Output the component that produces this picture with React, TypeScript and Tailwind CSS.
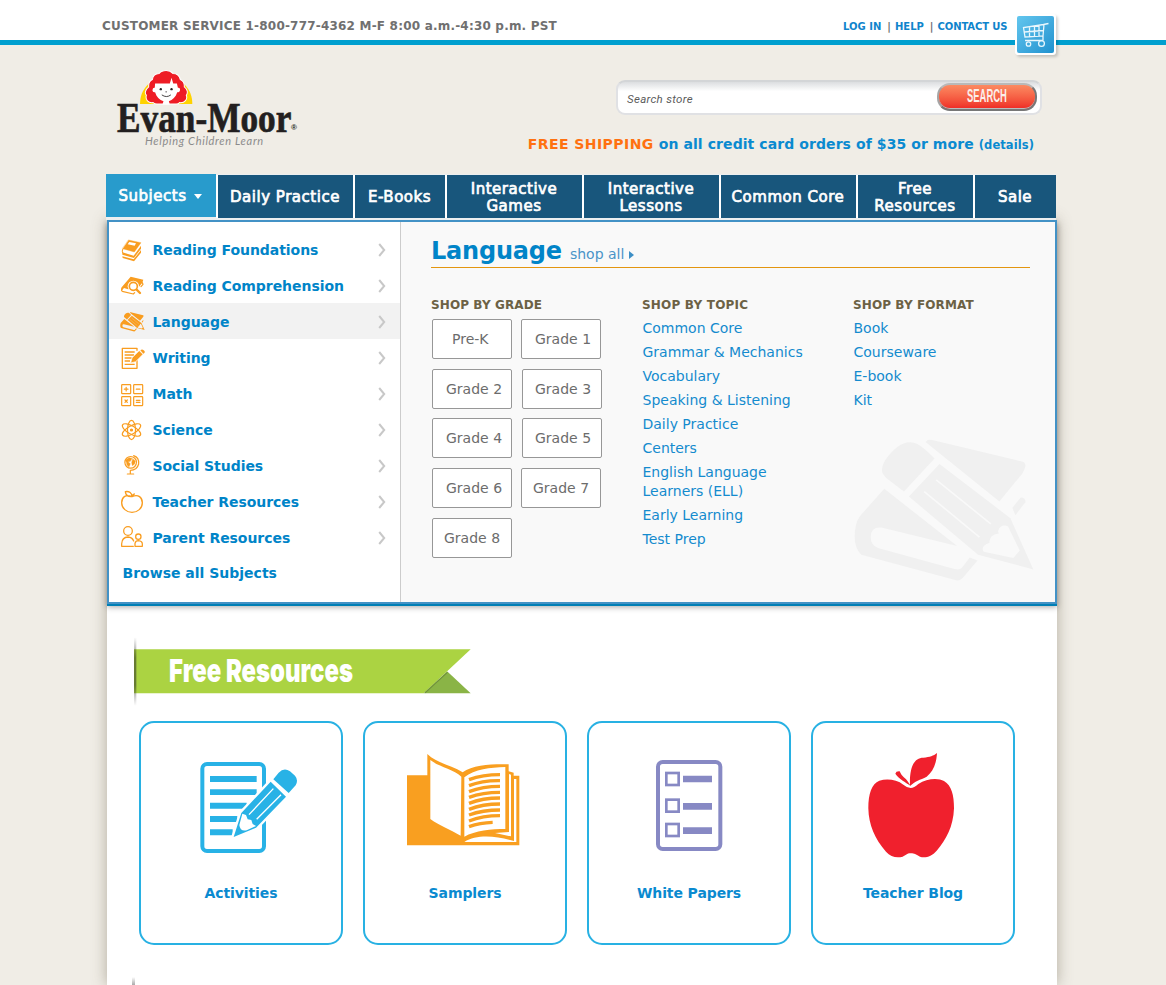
import React from "react";

const PencilBook = ({ bg }: { bg: string }) => (
  <>
    <path fill="currentColor" d="M157 150C157 120 190 90 205 78C225 62 250 60 270 74C290 88 302 101 315 114L223 213L170 172Q157 160 157 150Z" />
    <path fill="currentColor" d="M288 64L295 58Q300 56 308 58L578 123Q590 126 588 138Q586 148 578 160L510 243Z" />
    <path fill="currentColor" d="M238 228L330 130L543 293L612 447L446 403Z" />
    <path stroke={bg} strokeWidth="5" fill="none" d="M320 178L484 310M284 213L450 350" />
    <path fill={bg} d="M506 332Q510 314 528 315L536 318L571 390L552 413L463 394Q456 385 464 376Q470 370 480 368Q480 352 490 345Q500 338 508 340Z" />
    <path fill="currentColor" d="M549 262L574 231Q590 232 588 245L558 284Z" />
    <path fill="currentColor" d="M164 205L383 377L155 321Q123 318 123 350Q123 374 145 383L375 446Q390 450 397 443L421 411L444 420L402 470Q393 482 380 480L95 403Q75 385 75 350Q75 310 90 288Z" />
  </>
);

const Icon = ({ vb, children }: { vb: string; children: React.ReactNode }) => (
  <svg viewBox={vb} className="h-6 w-[25px] shrink-0 overflow-visible text-[#f99d20]" fill="none" stroke="currentColor" strokeWidth="4" strokeLinejoin="round" strokeLinecap="round">
    {children}
  </svg>
);

const subjects = [
  {
    name: "Reading Foundations",
    icon: (
      <Icon vb="60 21 75 72">
        <path fill="currentColor" strokeWidth="1" d="M86 30L123 38L103 66L68 56Z" />
        <path fill="#fff" stroke="none" d="M88 36L108 40L104 47L83 43Z" />
        <path fill="currentColor" stroke="none" d="M67 67L101 77L123 47V56L102 84L67 74Z" />
        <path fill="currentColor" stroke="none" d="M67 79L101 88L123 60V68L102 94L68 84Z" />
        <path strokeWidth="3" d="M68 58Q65 63 68 69" />
      </Icon>
    ),
  },
  {
    name: "Reading Comprehension",
    icon: (
      <Icon vb="60 129 75 72">
        <path fill="currentColor" stroke="none" d="M92 140L130 149L127 158L116 172L84 178L72 174L64 184L65 172Z" />
        <path d="M66 174Q63 182 67 184L100 192L104 188M127 158L129 163L123 170" strokeWidth="3.500" />
        <circle cx="100" cy="169" r="17" fill="#fff" stroke="none" />
        <circle cx="100" cy="169" r="12" fill="#fff" strokeWidth="5" />
        <path d="M110 179L120 189" strokeWidth="7" />
      </Icon>
    ),
  },
  {
    name: "Language",
    icon: (
      <svg viewBox="70 50 550 440" className="mt-[2px] h-[20px] w-[25px] shrink-0 text-[#f99d20]">
        <PencilBook bg="#f2f2f2" />
      </svg>
    ),
  },
  {
    name: "Writing",
    icon: (
      <Icon vb="60 345 75 72">
        <path d="M111 361V355H67V415H111V392" />
        <path d="M74 366H104M74 375H102M74 384H95M74 393H90M74 403H104" strokeWidth="4" strokeLinecap="butt" />
        <path fill="currentColor" stroke="#fff" strokeWidth="2" d="M118 362L129 373L107 395L92 399L96 384Z" />
        <path fill="currentColor" stroke="none" d="M121 361Q126 356 130 360Q137 365 133 369L130 371Z" />
      </Icon>
    ),
  },
  {
    name: "Math",
    icon: (
      <Icon vb="60 453 75 72">
        <g strokeWidth="3.600">
          <rect x="65" y="464" width="27" height="27" rx="2" />
          <rect x="101" y="464" width="27" height="27" rx="2" />
          <rect x="65" y="500" width="27" height="27" rx="2" />
          <rect x="101" y="500" width="27" height="27" rx="2" />
          <path d="M73 477.500H84M78.500 472V483M109 477.500H120M75 510L82 517M82 510L75 517M109 511H120M109 517H120" />
        </g>
      </Icon>
    ),
  },
  {
    name: "Science",
    icon: (
      <Icon vb="60 51 75 72">
        <g strokeWidth="3.600">
          <ellipse cx="94.500" cy="90" rx="12" ry="29" />
          <ellipse cx="94.500" cy="90" rx="12" ry="31" transform="rotate(60 94.500 90)" />
          <ellipse cx="94.500" cy="90" rx="12" ry="31" transform="rotate(-60 94.500 90)" />
          <circle cx="94.500" cy="90" r="3" fill="currentColor" />
        </g>
      </Icon>
    ),
  },
  {
    name: "Social Studies",
    icon: (
      <Icon vb="60 159 75 72">
        <g strokeWidth="3.600">
          <circle cx="92" cy="187" r="17.500" />
          <path d="M101 167Q118 173 116 192Q111 211 91 211M91 211V222M82 222H101" />
          <path fill="currentColor" strokeWidth="1" d="M77 180L87 173L96 175L91 184L84 185L91 191L87 201L81 195ZM98 176L106 183L104 192L97 197L95 188Z" />
        </g>
      </Icon>
    ),
  },
  {
    name: "Teacher Resources",
    icon: (
      <Icon vb="60 267 75 72">
        <path strokeWidth="4" d="M96 290C76 281 65 293 65 308C65 325 80 337 96 337C113 337 127 325 127 308C127 293 115 281 96 290ZM96 290C82 291 77 286 76 275C88 273 96 279 96 290ZM97 289Q97 284 103 282" />
      </Icon>
    ),
  },
  {
    name: "Parent Resources",
    icon: (
      <Icon vb="60 375 75 72">
        <g strokeWidth="3.800">
          <circle cx="84" cy="393" r="13" />
          <path d="M65 439V431Q66 412 84 411Q97 412 101 423M65 439H100" />
          <circle cx="115" cy="410" r="8" />
          <path d="M105 439V430Q107 422 115 422Q127 423 127 432V439Z" />
        </g>
      </Icon>
    ),
  },
];

const navItems = [
  { lines: ["Daily Practice"], w: "w-[135px]" },
  { lines: ["E-Books"], w: "w-[90px]" },
  { lines: ["Interactive", "Games"], w: "w-[135px]" },
  { lines: ["Interactive", "Lessons"], w: "w-[135px]" },
  { lines: ["Common Core"], w: "w-[135px]" },
  { lines: ["Free", "Resources"], w: "w-[115px]" },
  { lines: ["Sale"], w: "w-[81px]" },
];

const grades = [
  [["Pre-K", "pl-[19px]"], ["Grade 1", "ml-[9px] pl-[13px]"]],
  [["Grade 2", "pl-[13px]"], ["Grade 3", "ml-[10px] pl-[12px]"]],
  [["Grade 4", "pl-[13px]"], ["Grade 5", "ml-[10px] pl-[12px]"]],
  [["Grade 6", "pl-[13px]"], ["Grade 7", "ml-[9px] pl-[11px]"]],
  [["Grade 8", "pl-[11px]"]],
];

const topics = ["Common Core", "Grammar & Mechanics", "Vocabulary", "Speaking & Listening", "Daily Practice", "Centers", "English Language Learners (ELL)", "Early Learning", "Test Prep"];
const formats = ["Book", "Courseware", "E-book", "Kit"];

const Logo = () => (
  <div className="relative ml-[10px] h-[82px] w-[190px]">
    <svg viewBox="145 205 170 110" className="absolute top-0 left-[21px] h-[37px] w-[57px]">
      <path fill="#ffd200" d="M151 312C151 268 182 234 229 234C277 234 307 268 307 312Z" />
      <path fill="#ee1c25" stroke="#fff" strokeWidth="3" d="M229 212C218 212 212 216 208 221C194 222 189 230 188 239C179 243 176 251 177 261C167 269 164 280 170 286C166 300 176 310 190 308C194 312 200 313 206 312H254C260 313 266 312 269 308C284 310 294 298 289 286C295 279 292 267 283 261C284 250 280 243 271 239C269 228 261 221 249 221C244 215 239 212 229 212Z" />
      <path fill="#fff" d="M196 251H240L245 234L250 251H261L264 264Q272 263 270 273Q267 279 262 277C258 291 248 300 237 304L240 314H218L221 304C209 300 200 291 196 277Q189 279 188 271Q189 263 195 264Z" />
      <circle cx="213" cy="268" r="3.500" fill="#231f20" />
      <circle cx="245" cy="268" r="3.500" fill="#231f20" />
      <path stroke="#231f20" strokeWidth="2.500" fill="none" d="M216 285Q230 295 243 285M227 276H231" />
    </svg>
    <div className="absolute top-[33px] left-0 origin-left scale-x-[0.84] font-['Liberation_Serif',serif] text-[42px] leading-[34px] font-bold whitespace-nowrap text-[#231f20] [-webkit-text-stroke:0.7px_#231f20]">Evan-Moor</div>
    <div className="absolute top-[53px] left-[174px] font-['Liberation_Sans',sans-serif] text-[8px] leading-[14px] font-bold text-[#231f20]">®</div>
    <div className="absolute top-[67px] left-[28px] font-['Lato',sans-serif] text-[11px] leading-[12px] tracking-[0.7px] whitespace-nowrap text-[#8b8b8b] italic">Helping Children Learn</div>
  </div>
);

const cards = [
  {
    label: "Activities",
    vb: "33 39 600 450",
    art: (
      <>
        <rect x="217" y="162" width="185" height="261" rx="14" fill="none" stroke="#28b2e6" strokeWidth="12" />
        <path fill="#28b2e6" d="M240 198H380V216H240ZM240 238H380V255H240ZM240 278H350V296H240ZM240 318H322V336H240ZM240 358H308V376H240Z" />
        <path fill="#28b2e6" stroke="#fff" strokeWidth="14" d="M422 215L468 260L378 353L311 381L334 309ZM430 208L446 188Q462 172 480 184L495 197Q506 210 497 226L476 249Z" />
        <path fill="#28b2e6" d="M422 215L468 260L378 353L311 381L334 309ZM430 208L446 188Q462 172 480 184L495 197Q506 210 497 226L476 249Z" />
        <path stroke="#fff" strokeWidth="4" fill="none" d="M430 236L357 314M453 254L380 328" />
        <path fill="#fff" d="M337 311L348 315L353 328L364 330L368 342L378 348L350 361Q330 365 328 345Z" />
      </>
    ),
  },
  {
    label: "Samplers",
    vb: "705 39 600 450",
    art: (
      <>
        <path fill="#f99f20" d="M892 132C920 160 965 165 998 187C1030 163 1090 162 1136 163V184L1151 188V197H1168V406H831V196H892Z" />
        <path fill="#fff" d="M901 150C925 170 970 178 994 200L992 377C960 358 925 345 901 327ZM1003 202C1035 176 1080 173 1126 171V357C1085 357 1035 362 1003 380ZM1137 192L1143 194V379L1095 369L1137 366ZM1152 207H1159V396H1003C1040 372 1100 378 1152 393Z" />
        <path stroke="#f99f20" strokeWidth="10" fill="none" d="M1017 209Q1058 194 1110 194M1017 227Q1058 211 1110 212M1017 245Q1058 229 1110 229M1017 262Q1058 247 1110 247M1017 280Q1058 264 1110 264M1017 298Q1058 282 1110 282M1017 315Q1058 300 1110 300M1017 333Q1058 317 1110 317M1017 350Q1050 338 1088 337" />
      </>
    ),
  },
  {
    label: "White Papers",
    vb: "27 39 600 450",
    art: (
      <g stroke="#8789c4" fill="none">
        <rect x="234" y="156" width="187" height="261" rx="14" strokeWidth="12" />
        <g strokeWidth="8">
          <rect x="259" y="189" width="37" height="36" />
          <rect x="259" y="269" width="37" height="36" />
          <rect x="259" y="342" width="37" height="36" />
        </g>
        <path strokeWidth="20" d="M309 207H396M309 289H396M309 362H396" />
      </g>
    ),
  },
  {
    label: "Teacher Blog",
    vb: "699 39 600 450",
    art: (
      <path
        fill="#f0202d"
        d="M992 234Q1002 234 1015 222C1040 205 1075 203 1092 213C1115 227 1122 255 1122 295C1120 350 1098 390 1070 422C1055 440 1035 445 1020 440C1005 433 1005 430 992 430C980 430 978 436 968 440C950 445 932 441 918 425C885 388 866 345 865 295C865 250 875 222 898 212C920 205 950 208 970 224Q982 234 992 234ZM990 228C988 180 998 143 1030 143C1050 141 1060 138 1071 129C1069 165 1058 185 1040 200C1020 210 1005 213 990 228ZM946 191Q948 183 959 184C965 200 978 205 984 215L992 228C975 215 958 208 946 191Z"
      />
    ),
  },
];

export default function App() {
  return (
    <div className="h-[985px] w-[1166px] overflow-hidden bg-[#f0ede6] font-['DejaVu_Sans',sans-serif]">
      <header className="flex h-[45px] items-start border-b-[5px] border-[#009fcf] bg-white pl-[102px]">
        <div className="w-[741px] pt-[18px] text-[12px] leading-4 font-bold tracking-[0.2px] text-[#707070]">CUSTOMER SERVICE 1-800-777-4362 M-F 8:00 a.m.-4:30 p.m. PST</div>
        <div className="flex w-[172px] pt-[20px] text-[10px] leading-[14px] font-bold whitespace-nowrap text-[#0f84cc]">
          <a>LOG IN</a>
          <span className="mr-[4px] ml-[6px] text-[#707070]">|</span>
          <a>HELP</a>
          <span className="mr-[4px] ml-[6px] text-[#707070]">|</span>
          <a className="tracking-[-0.1px]">CONTACT US</a>
        </div>
        <div className="relative z-10 mt-[14px] h-[41px] w-[41px] rounded-[3px] bg-white p-[2px] shadow-[2px_2px_3px_rgba(0,0,0,0.18)]">
          <svg viewBox="0 0 37 37" className="h-[37px] w-[37px] rounded-[2px] bg-linear-to-br from-[#62c6ee] to-[#1e92cf]" fill="none" stroke="#e9f7fd" strokeWidth="1.300">
            <path d="M31.500 7.500L26.500 8.500L6.500 11.500L8 21L26 20L27 8.500M8 24.500H26M26 20V24.500M7.300 16L26.500 14.500M12.500 11V21M17.500 10V20.500M22 9.500V20" />
            <circle cx="11.500" cy="28" r="2.200" />
            <circle cx="24.500" cy="27.500" r="2.900" />
          </svg>
        </div>
      </header>

      <div className="ml-[107px] w-[950px]">
        <div className="flex h-[129px] justify-between">
          <div className="pt-[23px]">
            <Logo />
          </div>
          <div className="flex flex-col items-end pt-[35px]">
            <div className="mr-[15px] flex h-[35px] w-[426px] items-start justify-between rounded-[9px] border-2 border-[#e0e1e4] border-t-[#d3d5d7] bg-linear-to-b from-[#dcdee0] via-white via-30% to-white pr-[3px] pl-[9px]">
              <span className="pt-[10px] font-['Roboto',sans-serif] text-[11.5px] leading-[14px] tracking-[0.3px] text-[#5c5c5c] italic">Search store</span>
              <button className="mt-px flex h-[28px] w-[100px] justify-center rounded-[13px] border-2 border-t-[#b9b9b9] border-r-[#777] border-b-[#777] border-l-[#a5a5a5] bg-linear-to-b from-[#fb8a62] to-[#ee2524] shadow-[inset_0_-1px_0_#bbb]">
                <span className="scale-x-[0.54] font-['Liberation_Sans',sans-serif] text-[17.5px] leading-[23px] font-bold text-[#fbeeea]">SEARCH</span>
              </button>
            </div>
            <div className="mt-[20px] mr-[23px] text-[14px] leading-[18px] font-bold tracking-[0.08px] whitespace-nowrap text-[#0a8ad0]">
              <span className="tracking-[0.45px] text-[#ff7110]">FREE SHIPPING</span> on all credit card orders of $35 or more <span className="text-[11.5px]">(details)</span>
            </div>
          </div>
        </div>

        <nav className="relative z-10 -ml-px flex h-[46px] w-[950px] items-start bg-[#eceff0] text-[15px] leading-[17px] tracking-[0.52px] text-white [-webkit-text-stroke:0.7px_#fff]">
          <div className="mr-[2px] flex h-[43px] w-[110px] items-center justify-center gap-[7px] bg-[#289bcc] pt-[2px] pr-[2px]">
            Subjects
            <svg viewBox="0 0 8 5" className="h-[5px] w-[8px]" stroke="none">
              <path fill="#fff" d="M0 0H8L4 5Z" />
            </svg>
          </div>
          <div className="mt-px -ml-[2px] flex gap-[2px] bg-white pl-[2px]">
            {navItems.map((n, i) => (
              <div key={i} className={`flex h-[43px] flex-col items-center justify-center bg-[#18567c] pt-[2px] pr-px text-center ${n.w}`}>
                {n.lines.map((l) => (
                  <span key={l}>{l}</span>
                ))}
              </div>
            ))}
          </div>
        </nav>

        <main className="h-[765px] bg-white shadow-[0_0_14px_rgba(90,80,60,0.42)]">
          <section className="relative flex h-[384px] border-2 border-[#4392c6] bg-[#f9f9f9] shadow-[0_2px_0_#007fb5,0_3px_6px_rgba(0,0,0,0.35)]">
            <div className="w-[292px] border-r border-[#ccc] bg-white pt-[9px]">
              {subjects.map((s) => (
                <div key={s.name} className={`flex h-9 items-center pl-[11px] ${s.name === "Language" ? "bg-[#f2f2f2]" : ""}`}>
                  {s.icon}
                  <span className="ml-[7.5px] flex-1 pt-px text-[14px] leading-5 font-bold tracking-[-0.05px] text-[#0084c8]">{s.name}</span>
                  <svg viewBox="0 0 8 14" className="mt-px mr-[14px] h-[14px] w-[8px]" fill="none" stroke="#c8c8c8" strokeWidth="2">
                    <path d="M1.200 1L6.200 7L1.200 13" />
                  </svg>
                </div>
              ))}
              <div className="pt-[8px] pl-[13.5px] text-[14px] leading-[20px] font-bold text-[#0084c8]">Browse all Subjects</div>
            </div>
            <div className="w-[654px] pt-[12px] pr-[25px] pl-[30px]">
              <div className="flex h-[34px] items-baseline border-b border-[#e3960f] pt-px whitespace-nowrap">
                <h2 className="text-[24px] leading-[33px] font-bold tracking-[-0.2px] text-[#0084c8]">Language</h2>
                <span className="ml-[8px] text-[14px] text-[#4a94c8]">shop all</span>
                <svg viewBox="0 0 5 8" className="ml-[5px] h-[8px] w-[5px]">
                  <path fill="#3d8fc6" d="M0 0L5 4L0 8Z" />
                </svg>
              </div>
              <div className="flex pt-[29px]">
                <div className="w-[211px]">
                  <h3 className="mb-[14px] h-[8px] text-[12px] leading-[16px] font-bold tracking-[0.1px] text-[#6c6145]">SHOP BY GRADE</h3>
                  {grades.map((row, r) => (
                    <div key={r} className="mb-[9.7px] ml-px flex">
                      {row.map(([g, cls]) => (
                        <div key={g} className={`h-[40px] w-[80px] rounded-[2px] border border-[#979797] bg-white text-[14px] leading-[38px] whitespace-nowrap text-[#6c6c6c] ${cls}`}>
                          {g}
                        </div>
                      ))}
                    </div>
                  ))}
                </div>
                <div className="w-[211px]">
                  <h3 className="text-[12px] leading-[16px] font-bold tracking-[0.2px] text-[#6c6145]">SHOP BY TOPIC</h3>
                  <ul className="mt-[6px] ml-[0.5px] w-[170px] text-[14px] leading-[19px] text-[#148bce]">
                    {topics.map((t) => (
                      <li key={t} className="mb-[5px]">{t}</li>
                    ))}
                  </ul>
                </div>
                <div>
                  <h3 className="text-[12px] leading-[16px] font-bold tracking-[0.1px] text-[#6c6145]">SHOP BY FORMAT</h3>
                  <ul className="mt-[6px] ml-[0.5px] text-[14px] leading-[19px] text-[#148bce]">
                    {formats.map((t) => (
                      <li key={t} className="mb-[5px]">{t}</li>
                    ))}
                  </ul>
                </div>
              </div>
            </div>
            <svg viewBox="70 50 550 440" className="absolute right-[19px] bottom-[18px] h-[147px] w-[183px] text-[#f0f0f0]">
              <PencilBook bg="#f9f9f9" />
            </svg>
          </section>

          <section className="pt-[45px]">
            <div className="relative ml-[27px] h-[44px] w-[337px]">
              <svg viewBox="133 126 1011 206" className="absolute -top-[12px] left-0 h-[69px] w-[337px]">
                <defs>
                  <linearGradient id="edge" x1="0" y1="0" x2="0" y2="1">
                    <stop offset="0" stopColor="#222" stopOpacity="0" />
                    <stop offset="0.3" stopColor="#222" stopOpacity="0.500" />
                    <stop offset="0.7" stopColor="#222" stopOpacity="0.500" />
                    <stop offset="1" stopColor="#222" stopOpacity="0" />
                  </linearGradient>
                </defs>
                <path fill="#abd342" d="M133 162H1143L1002 294H133Z" />
                <path fill="#8ab446" d="M1073 229L1143 294H1002Z" />
                <path stroke="#5d7f2c" strokeOpacity="0.6" strokeWidth="4" d="M1073 231L1006 293" />
                <rect x="133" y="126" width="7" height="206" fill="url(#edge)" />
              </svg>
              <h2 className="absolute top-0 left-[35px] origin-left scale-x-[0.745] font-['Inter',sans-serif] text-[32px] leading-[44px] font-black whitespace-nowrap text-white">Free Resources</h2>
            </div>
            <div className="mt-[28px] ml-[32px] flex gap-5">
              {cards.map((c) => (
                <div key={c.label} className="h-[224px] w-[204px] rounded-[15px] border-2 border-[#28b1e3]">
                  <svg viewBox={c.vb} className="h-[150px] w-[200px]">
                    {c.art}
                  </svg>
                  <div className="pt-[10px] text-center text-[14px] leading-5 font-bold tracking-[-0.1px] text-[#0a8ad0]">{c.label}</div>
                </div>
              ))}
            </div>
            <div className="mt-[32px] ml-[25px] h-[8px] w-[3px] bg-linear-to-b from-transparent to-[#aaa]" />
          </section>
        </main>
      </div>
    </div>
  );
}
